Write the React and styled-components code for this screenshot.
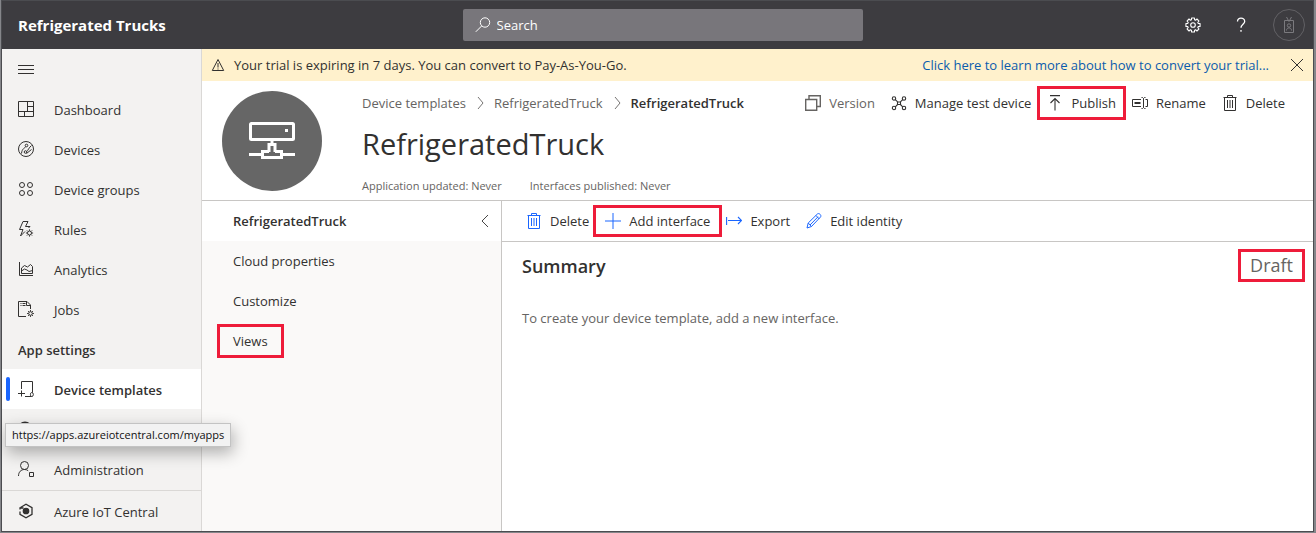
import React from "react";
import styled, { createGlobalStyle, css } from "styled-components";

const color = {
  header: "#3d3c40",
  search: "#78767b",
  side: "#f3f2f1",
  panel: "#faf9f8",
  line: "#c8c6c4",
  softLine: "#dad8d6",
  text: "#323130",
  muted: "#666462",
  banner: "#fff1cc",
  blue: "#1a66ff",
  link: "#0b5cad",
  mark: "#ee1c3a",
};

const GlobalStyle = createGlobalStyle`
  * { box-sizing: border-box; }
  body {
    margin: 0;
    background: #85868a;
    color: ${color.text};
    font-family: "Open Sans", "Noto Sans", sans-serif;
    font-size: 13px;
    line-height: 20px;
  }
  button, input { font: inherit; color: inherit; }
  button { border: 0; background: none; padding: 0; cursor: pointer; }
  a { color: inherit; text-decoration: none; }
  h1, h2, p, ul, ol { margin: 0; padding: 0; }
  ul, ol { list-style: none; }
`;

const Frame = styled.div`
  display: flex;
  flex-direction: column;
  min-height: 100vh;
  padding: 1px 3px 2px 2px;
  background: #85868a;
`;

const Window = styled.div`
  flex: 1;
  display: flex;
  flex-direction: column;
  background: #fff;
  box-shadow: 0 0 0 1px #4b4c50;
`;

const TopBar = styled.header`
  display: grid;
  grid-template-columns: minmax(0, 1fr) minmax(0, 400px) minmax(0, 1fr);
  align-items: center;
  height: 48px;
  padding-left: 10px;
  background: ${color.header};
  color: #fff;
`;

const AppName = styled.a`
  padding-left: 6px;
  font-size: 15px;
  font-weight: 700;
  white-space: nowrap;
`;

const SearchBox = styled.label`
  display: flex;
  align-items: center;
  gap: 6px;
  height: 32px;
  padding: 0 12px;
  border-radius: 2px;
  background: ${color.search};
`;

const SearchInput = styled.input`
  flex: 1;
  min-width: 0;
  padding: 0;
  border: 0;
  outline: 0;
  background: none;
  &::placeholder { color: #fff; opacity: 1; }
`;

const TopActions = styled.div`
  display: flex;
  justify-content: flex-end;
`;

const TopButton = styled.button`
  display: flex;
  align-items: center;
  justify-content: center;
  width: 48px;
  height: 48px;
`;

const Avatar = styled.span`
  display: flex;
  align-items: center;
  justify-content: center;
  width: 32px;
  height: 32px;
  border: 1px solid #626165;
  border-radius: 50%;
  color: #7b7a7e;
`;

const Body = styled.div`
  flex: 1;
  display: flex;
`;

const Sidebar = styled.nav`
  position: relative;
  display: flex;
  flex-direction: column;
  flex: 0 0 200px;
  border-right: 1px solid ${color.softLine};
  background: ${color.side};
`;

const MenuButton = styled.button`
  display: flex;
  align-items: center;
  height: 40px;
  padding-left: 16px;
`;

const NavLink = styled.a`
  position: relative;
  display: flex;
  align-items: center;
  gap: 20px;
  height: 40px;
  padding: 0 16px;
  white-space: nowrap;
  ${(p) =>
    p.$active &&
    css`
      background: #fff;
      font-weight: 600;
      &::before {
        content: "";
        position: absolute;
        left: 4px;
        top: 8px;
        width: 4px;
        height: 24px;
        border-radius: 2px;
        background: ${color.blue};
      }
    `}
`;

const NavLabel = styled.span`
  line-height: 20px;
  padding-top: 2px;
`;

const NavHeading = styled.h2`
  height: 40px;
  padding: 11px 16px 0;
  font-size: 13px;
  font-weight: 600;
`;

const NavFooter = styled.div`
  margin-top: auto;
  border-top: 1px solid ${color.softLine};
`;

const StatusTip = styled.div`
  position: absolute;
  z-index: 2;
  left: 3px;
  top: 374px;
  height: 24px;
  padding: 0 6px;
  border: 1px solid #c3c3c3;
  background: #f2f2f2;
  box-shadow: 2px 6px 16px rgba(0, 0, 0, 0.3);
  color: #111;
  font-size: 11px;
  line-height: 22px;
  white-space: nowrap;
`;

const Main = styled.main`
  flex: 1;
  min-width: 0;
  display: flex;
  flex-direction: column;
`;

const Banner = styled.div`
  display: flex;
  align-items: center;
  height: 32px;
  padding: 0 8px;
  background: ${color.banner};
  white-space: nowrap;
`;

const BannerText = styled.p`
  flex: 1;
  padding-left: 8px;
`;

const BannerLink = styled.a`
  margin-right: 20px;
  color: ${color.link};
`;

const PageHead = styled.section`
  display: flex;
  gap: 40px;
  padding: 10px 28px 4px 20px;
  border-bottom: 1px solid ${color.line};
`;

const Emblem = styled.div`
  display: flex;
  align-items: center;
  justify-content: center;
  flex: 0 0 100px;
  height: 100px;
  border-radius: 50%;
  background: #666;
  color: #fff;
`;

const HeadContent = styled.div`
  flex: 1;
  min-width: 0;
`;

const HeadRow = styled.div`
  display: flex;
  align-items: center;
  justify-content: space-between;
  height: 23px;
`;

const Crumbs = styled.ol`
  display: flex;
  align-items: center;
  color: ${color.muted};
  white-space: nowrap;
`;

const Crumb = styled.li`
  display: flex;
  align-items: center;
  gap: 6px;
  margin-right: 6px;
  &:last-child { color: ${color.text}; font-weight: 600; }
`;

const Title = styled.h1`
  margin-top: 10px;
  font-size: 29px;
  font-weight: 400;
  line-height: 40px;
`;

const Meta = styled.p`
  display: flex;
  gap: 28px;
  margin-top: 12px;
  color: ${color.muted};
  font-size: 11px;
`;

const Commands = styled.div`
  display: flex;
  align-items: center;
  gap: 16px;
`;

const marked = css`
  position: relative;
  &::after {
    content: "";
    position: absolute;
    inset: -7px -10px;
    border: 3px solid ${color.mark};
    pointer-events: none;
  }
`;

const CommandButton = styled.button`
  display: flex;
  align-items: center;
  gap: 8px;
  white-space: nowrap;
  &:disabled { color: ${color.muted}; }
  svg { color: ${(p) => (p.$accent ? color.blue : "inherit")}; }
  ${(p) => p.$marked && marked}
  ${(p) => p.$marked && p.$accent && css`&::after { inset: -6px -12px; }`}
`;

const Workspace = styled.div`
  flex: 1;
  display: flex;
`;

const TemplatePanel = styled.aside`
  flex: 0 0 300px;
  border-right: 1px solid ${color.line};
  background: ${color.panel};
`;

const PanelHead = styled.div`
  display: flex;
  align-items: center;
  justify-content: space-between;
  height: 40px;
  padding: 0 8px 0 31px;
  background: #fff;
  font-weight: 600;
`;

const PanelItem = styled.li`
  display: flex;
  align-items: center;
  height: 40px;
  padding-left: 31px;
`;

const PanelLink = styled.a`
  ${(p) =>
    p.$marked &&
    css`
      ${marked}
      &::after { inset: -7px -16px; }
    `}
`;

const Detail = styled.section`
  flex: 1;
  min-width: 0;
`;

const DetailBar = styled.div`
  display: flex;
  align-items: center;
  height: 41px;
  padding-left: 24px;
  border-bottom: 1px solid ${color.line};
`;

const SummaryRow = styled.div`
  display: flex;
  align-items: center;
  justify-content: space-between;
  padding: 7px 8px 0 20px;
`;

const SummaryTitle = styled.h2`
  font-size: 18px;
  font-weight: 600;
  line-height: 32px;
`;

const Status = styled.span`
  padding: 0 9px;
  border: 3px solid ${color.mark};
  color: ${color.muted};
  font-size: 18px;
  line-height: 27px;
`;

const Hint = styled.p`
  padding: 26px 20px;
  color: ${color.muted};
`;

const Svg = styled.svg`
  display: block;
  flex: none;
  fill: none;
  stroke: currentColor;
`;

function Icon({ size = 16, box = 16, w = 1, children }) {
  return (
    <Svg width={size} height={size} viewBox={`0 0 ${box} ${box}`} strokeWidth={w} aria-hidden="true">
      {children}
    </Svg>
  );
}

const polar = (c, r, a) => `${(c + r * Math.cos(a)).toFixed(2)} ${(c + r * Math.sin(a)).toFixed(2)}`;

const cog = (cx, cy, r, k) =>
  Array.from({ length: 8 }, (_, i) => {
    const a = (i * Math.PI) / 4;
    return `M${cx + r * Math.cos(a)} ${cy + r * Math.sin(a)}L${cx + k * Math.cos(a)} ${cy + k * Math.sin(a)}`;
  }).join("");

const gearOutline =
  "M" +
  Array.from({ length: 8 }, (_, i) => {
    const a = (i * Math.PI) / 4;
    return [
      polar(8, 5.4, a - 0.3),
      polar(8, 7.2, a - 0.2),
      polar(8, 7.2, a + 0.2),
      polar(8, 5.4, a + 0.3),
    ].join("L");
  }).join("L") +
  "Z";

const icons = {
  menu: <Icon><path d="M0 4.500h16M0 8.500h16M0 12.500h16" /></Icon>,
  dashboard: <Icon><path d="M.5.5h15v15H.5zM9.500 .5v10M.5 10.500h15M9.500 5.500h6M6.500 10.500v5" /></Icon>,
  devices: (
    <Icon>
      <circle cx="8" cy="8" r="7.500" />
      <circle cx="8.500" cy="4.500" r="1.300" />
      <circle cx="7.500" cy="11" r="1.300" />
      <path d="M7.600 5.600C7 7.500 4 7 3.500 12.500M8.700 10.500C10 9.500 11 6.500 13.500 4.500M8.500 12.500l5-4" />
    </Icon>
  ),
  groups: (
    <Icon>
      <circle cx="4" cy="4" r="2.500" /><circle cx="12" cy="4" r="2.500" />
      <circle cx="4" cy="12" r="2.500" /><circle cx="12" cy="12" r="2.500" />
    </Icon>
  ),
  rules: (
    <Icon>
      <path d="M5 .5h5L7.500 5.500H12L10.500 7M5 .5L1.500 8.500H5L2.500 15l4.500-4.500" />
      <circle cx="11.500" cy="12" r="2" />
      <path d={cog(11.5, 12, 2.2, 3.6)} />
    </Icon>
  ),
  analytics: (
    <Icon>
      <path d="M1.500 1v13.500H15M3.500 12.500V7l3-2.500 3 1.500 3-2.500 2 2v7zM3.500 10l3-2 2.500 1 2 1.500 3.500-1" />
    </Icon>
  ),
  jobs: (
    <Icon>
      <path d="M8 15.500H.5V.5h8.500L12.500 4v4M8.500 .5V4.500h4M2.500 2.500h1M4.500 2.500h3M2.500 4.500h1M4.500 4.500h3" />
      <circle cx="12.500" cy="12.500" r="1.800" />
      <path d={cog(12.5, 12.5, 2, 3.4)} />
    </Icon>
  ),
  templates: <Icon><path d="M3.500 8V.5h11v11M0 12.500h7M3.500 9.500v6M7 15.500h6.500M13.500 15.500c-1.400 0-1.400-4 0-4h.500c1.800 0 1.800 4 0 4z" /></Icon>,
  dataExport: <Icon w={2}><path d="M3 3C5 1 9 1 11 3v10H3z" /></Icon>,
  admin: (
    <Icon>
      <circle cx="6.500" cy="4.500" r="4" />
      <path d="M.5 15c0-4 2.500-6.500 6-6.500 1.500 0 2.700.4 3.700 1.200M11.500 11.500h4v4h-4z" />
    </Icon>
  ),
  central: (
    <Icon w={1.3}>
      <path d="M2.500 4.500L8 1.300l6 3.400v6.600l-6 3.400-6-3.400V8.500M2 6.500V5h3.500" />
      <circle cx="8" cy="8" r="2.700" fill="currentColor" />
    </Icon>
  ),
  search: <Icon><circle cx="10" cy="5.500" r="4.700" /><path d="M6.600 9L.8 14.800" /></Icon>,
  gear: (
    <Icon w={1.1}>
      <circle cx="8" cy="8" r="2.300" />
      <path d={gearOutline} strokeLinejoin="round" />
    </Icon>
  ),
  help: <Icon w={1.3}><path d="M4.500 4.500C4.500 2.300 6 1.200 8 1.200s3.700 1.200 3.700 3.200C11.700 7 8 7.500 8 10.700M8 13v1.800" /></Icon>,
  badge: (
    <Icon>
      <path d="M3.500 3.500h9v12h-9zM5.500 0L8 4.500 10.500 0M5.500 13.500c0-3.500 5-3.500 5 0" />
      <circle cx="8" cy="8.500" r="1.700" />
    </Icon>
  ),
  warning: <Icon><path d="M8 2.500l5.700 11H2.300zM8 6v4.500M8 11.500v1" /></Icon>,
  close: <Icon><path d="M2 2l12 12M14 2L2 14" /></Icon>,
  chevronRight: <Icon w={0.9}><path d="M6 2l5 6-5 6" /></Icon>,
  chevronLeft: <Icon w={0.9}><path d="M11 2L5 8l6 6" /></Icon>,
  version: <Icon w={1.4}><path d="M.7 4.500h11v10.800H.7zM4 4.500V.7h11.300v10.800h-3.600" /></Icon>,
  manage: (
    <Icon w={1.1}>
      <circle cx="3" cy="3.500" r="1.700" /><circle cx="13" cy="3.500" r="1.700" />
      <circle cx="3" cy="13" r="1.700" /><circle cx="13" cy="13" r="1.700" />
      <path d="M4.300 4.600l2.300 2.300M11.700 4.600L9.400 6.900M4.300 11.800l2.300-2.300M11.700 11.800L9.400 9.500M6.500 7h3v2.500h-3z" />
    </Icon>
  ),
  publish: <Icon w={1.1}><path d="M3 .6h10M8 15.500V3.500M3.500 8L8 3.500 12.500 8" /></Icon>,
  rename: (
    <Icon>
      <path d="M9 11.500H.5v-7H9M13.500 4.500h2v7h-2M9.500 2.500h1l1 1 1-1h1M11.500 3.500v9M9.500 13.500h1l1-1 1 1h1" />
      <path d="M2.500 8h6" strokeWidth="2" />
    </Icon>
  ),
  trash: <Icon><path d="M1.500 2.500h13M5.500 2.500v-2h5v2M2.500 2.500v13h11v-13M5.500 5v8M8 5v8M10.500 5v8" /></Icon>,
  add: <Icon><path d="M8 0v16M0 8h16" /></Icon>,
  exportArrow: <Icon w={1.1}><path d="M.6 4v8M2 7.500h13.500M12 4l3.500 3.500L12 11" /></Icon>,
  edit: <Icon><path d="M1 15l1.200-5L11.500 .9c1.700-1.200 4.200 1.300 3.100 3L5.500 13.500zM2.200 10l3.300 3.500M10 2.500L13.300 6M4 12l8-8.200" /></Icon>,
};

const mainNav = [
  ["Dashboard", "dashboard"],
  ["Devices", "devices"],
  ["Device groups", "groups"],
  ["Rules", "rules"],
  ["Analytics", "analytics"],
  ["Jobs", "jobs"],
];

const headCommands = [
  { label: "Version", icon: "version", disabled: true },
  { label: "Manage test device", icon: "manage" },
  { label: "Publish", icon: "publish", marked: true },
  { label: "Rename", icon: "rename" },
  { label: "Delete", icon: "trash" },
];

const detailCommands = [
  { label: "Delete", icon: "trash" },
  { label: "Add interface", icon: "add", marked: true },
  { label: "Export", icon: "exportArrow" },
  { label: "Edit identity", icon: "edit" },
];

function NavItem({ icon, label, active }) {
  return (
    <NavLink href="#nav" $active={active}>
      {icons[icon]}
      <NavLabel>{label}</NavLabel>
    </NavLink>
  );
}

function CommandList({ items, accent }) {
  return (
    <Commands>
      {items.map((c) => (
        <CommandButton key={c.label} type="button" disabled={c.disabled} $accent={accent} $marked={c.marked}>
          {icons[c.icon]}
          {c.label}
        </CommandButton>
      ))}
    </Commands>
  );
}

function DeviceEmblem() {
  return (
    <Emblem>
      <Svg width="46" height="38" viewBox="0 0 46 38" strokeWidth="3" aria-hidden="true">
        <rect x="1.500" y="1.500" width="43" height="16" rx="1" />
        <path d="M23 18v4M0 32.500h12M34 32.500h12M20 30v-7.500h6V30M20 29.500h-6.500v6h19v-6H26" />
        <path d="M36 8.500h3" />
      </Svg>
    </Emblem>
  );
}

export default function App() {
  return (
    <Frame>
      <GlobalStyle />
      <Window>
        <TopBar>
          <AppName href="#home">Refrigerated Trucks</AppName>
          <SearchBox>
            {icons.search}
            <SearchInput type="text" placeholder="Search" aria-label="Search" />
          </SearchBox>
          <TopActions>
            <TopButton type="button" aria-label="Settings">{icons.gear}</TopButton>
            <TopButton type="button" aria-label="Help">{icons.help}</TopButton>
            <TopButton type="button" aria-label="Account"><Avatar>{icons.badge}</Avatar></TopButton>
          </TopActions>
        </TopBar>
        <Body>
          <Sidebar>
            <MenuButton type="button" aria-label="Menu">{icons.menu}</MenuButton>
            {mainNav.map(([label, icon]) => (
              <NavItem key={label} icon={icon} label={label} />
            ))}
            <NavHeading>App settings</NavHeading>
            <NavItem icon="templates" label="Device templates" active />
            <NavLink href="#nav" aria-label="Data export">{icons.dataExport}</NavLink>
            <NavItem icon="admin" label="Administration" />
            <NavFooter>
              <NavItem icon="central" label="Azure IoT Central" />
            </NavFooter>
            <StatusTip>https://apps.azureiotcentral.com/myapps</StatusTip>
          </Sidebar>
          <Main>
            <Banner>
              {icons.warning}
              <BannerText>Your trial is expiring in 7 days. You can convert to Pay-As-You-Go.</BannerText>
              <BannerLink href="#convert">Click here to learn more about how to convert your trial...</BannerLink>
              <button type="button" aria-label="Dismiss">{icons.close}</button>
            </Banner>
            <PageHead>
              <DeviceEmblem />
              <HeadContent>
                <HeadRow>
                  <Crumbs>
                    <Crumb><a href="#templates">Device templates</a>{icons.chevronRight}</Crumb>
                    <Crumb><a href="#truck">RefrigeratedTruck</a>{icons.chevronRight}</Crumb>
                    <Crumb>RefrigeratedTruck</Crumb>
                  </Crumbs>
                  <CommandList items={headCommands} />
                </HeadRow>
                <Title>RefrigeratedTruck</Title>
                <Meta>
                  <span>Application updated: Never</span>
                  <span>Interfaces published: Never</span>
                </Meta>
              </HeadContent>
            </PageHead>
            <Workspace>
              <TemplatePanel>
                <PanelHead>
                  RefrigeratedTruck
                  <button type="button" aria-label="Collapse">{icons.chevronLeft}</button>
                </PanelHead>
                <ul>
                  <PanelItem><PanelLink href="#cloud">Cloud properties</PanelLink></PanelItem>
                  <PanelItem><PanelLink href="#customize">Customize</PanelLink></PanelItem>
                  <PanelItem><PanelLink href="#views" $marked>Views</PanelLink></PanelItem>
                </ul>
              </TemplatePanel>
              <Detail>
                <DetailBar><CommandList items={detailCommands} accent /></DetailBar>
                <SummaryRow>
                  <SummaryTitle>Summary</SummaryTitle>
                  <Status>Draft</Status>
                </SummaryRow>
                <Hint>To create your device template, add a new interface.</Hint>
              </Detail>
            </Workspace>
          </Main>
        </Body>
      </Window>
    </Frame>
  );
}
